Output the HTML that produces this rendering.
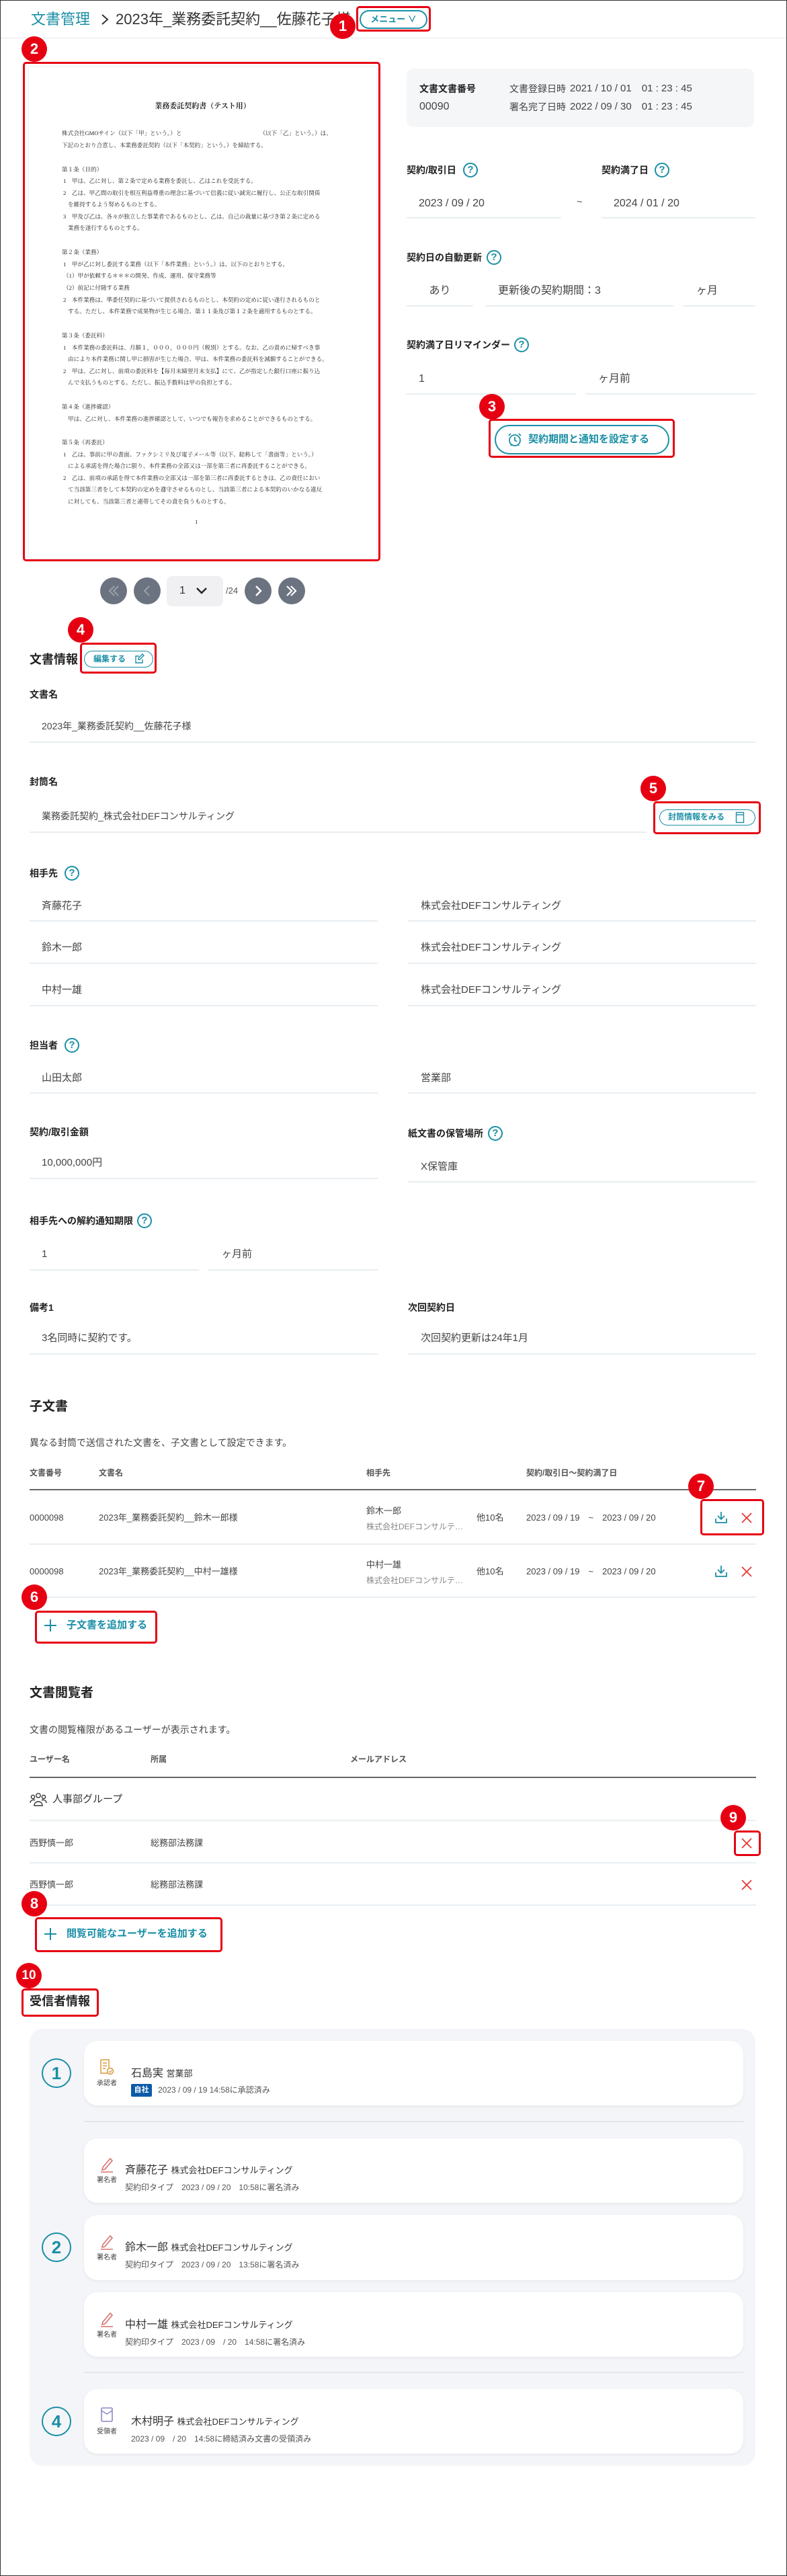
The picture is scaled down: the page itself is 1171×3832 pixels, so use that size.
<!DOCTYPE html>
<html><head><meta charset="utf-8">
<style>
*{margin:0;padding:0;box-sizing:border-box}
body{width:1171px;height:3832px;position:relative;background:#fff;font-family:"Liberation Sans","Noto Sans CJK JP",sans-serif;color:#333;overflow:hidden}
.a{position:absolute;white-space:nowrap}
.frame{position:absolute;left:0;top:0;width:1171px;height:3832px;border:1px solid #333;pointer-events:none;z-index:50}
.rb{position:absolute;border:3px solid #e60012;border-radius:5px;z-index:20}
.bd{position:absolute;width:38px;height:38px;border-radius:50%;background:#e60012;color:#fff;font-weight:bold;font-size:22px;line-height:38px;text-align:center;z-index:21}
.lb{font-size:14px;font-weight:bold;color:#222;line-height:20px}
.v{font-size:15px;color:#444;line-height:20px}
.ul{position:absolute;height:2px;background:#e8eef1}
.q{position:absolute;width:22px;height:22px;border:2px solid #1a8fa6;border-radius:50%;color:#1a8fa6;font-size:15px;line-height:18px;text-align:center;font-weight:bold}
.teal{color:#1a8fa6}
.ds{font-family:"Liberation Serif","Noto Serif CJK JP",serif;font-size:8.6px;color:#222;line-height:12px;position:absolute;white-space:nowrap}
.pg{position:absolute;width:40px;height:40px;border-radius:50%;background:#6c7380;top:859px}
.card{position:absolute;left:125px;width:981px;background:#fff;border-radius:20px;box-shadow:0 2px 4px rgba(0,0,0,.06)}
.num{position:absolute;left:62px;width:44px;height:44px;border:2px solid #1a8fa6;border-radius:50%;color:#1a8fa6;font-size:26px;line-height:40px;text-align:center;font-weight:bold}
.sm{font-size:10px;color:#444}
</style></head><body>
<div class="frame"></div>

<!-- header -->
<div class="a teal" style="left:46px;top:15px;font-size:22px;line-height:28px">文書管理</div>
<svg class="a" style="left:149px;top:20px" width="14" height="18"><path d="M3 2 L11 9 L3 16" fill="none" stroke="#333" stroke-width="2"/></svg>
<div class="a" style="left:172px;top:15px;font-size:22px;line-height:28px;color:#333">2023年_業務委託契約__佐藤花子様</div>
<div class="a" style="left:535px;top:15px;width:101px;height:28px;border:2px solid #1a8fa6;border-radius:14px;background:#fff;color:#1a8fa6;font-size:13px;font-weight:bold;line-height:24px;text-align:center;z-index:5">メニュー ∨</div>
<div class="a" style="left:0;top:56px;width:1171px;height:1px;background:#e5e7eb"></div>
<div class="rb" style="left:530px;top:9px;width:111px;height:38px"></div>
<div class="bd" style="left:491px;top:20px">1</div>

<!-- document page -->
<div class="a" style="left:43px;top:100px;width:517px;height:730px;background:#fff;box-shadow:0 0 4px rgba(0,0,0,.12)"></div>
<div class="ds" style="left:0;width:603px;text-align:center;top:152px;font-size:11px;font-weight:bold">業務委託契約書（テスト用）</div>
<div class="ds" style="left:92px;top:192px">株式会社GMOサイン（以下「甲」という。）と　　　　　　　　　　　　　　（以下「乙」という。）は、</div>
<div class="ds" style="left:92px;top:210px">下記のとおり合意し、本業務委託契約（以下「本契約」という。）を締結する。</div>
<div class="ds" style="left:92px;top:246px">第１条（目的）</div>
<div class="ds" style="left:94px;top:263px">1　甲は、乙に対し、第２条で定める業務を委託し、乙はこれを受託する。</div>
<div class="ds" style="left:94px;top:281px">2　乙は、甲乙間の取引を相互利益尊重の理念に基づいて信義に従い誠実に履行し、公正な取引関係</div>
<div class="ds" style="left:101px;top:298px">を維持するよう努めるものとする。</div>
<div class="ds" style="left:94px;top:316px">3　甲及び乙は、各々が独立した事業者であるものとし、乙は、自己の裁量に基づき第２条に定める</div>
<div class="ds" style="left:101px;top:333px">業務を遂行するものとする。</div>
<div class="ds" style="left:92px;top:369px">第２条（業務）</div>
<div class="ds" style="left:94px;top:387px">1　甲が乙に対し委託する業務（以下「本件業務」という。）は、以下のとおりとする。</div>
<div class="ds" style="left:94px;top:404px">（1）甲が依頼する＊＊＊の開発、作成、運用、保守業務等</div>
<div class="ds" style="left:94px;top:422px">（2）前記に付随する業務</div>
<div class="ds" style="left:94px;top:440px">2　本件業務は、準委任契約に基づいて提供されるものとし、本契約の定めに従い遂行されるものと</div>
<div class="ds" style="left:101px;top:457px">する。ただし、本件業務で成果物が生じる場合、第１１条及び第１２条を適用するものとする。</div>
<div class="ds" style="left:92px;top:493px">第３条（委託料）</div>
<div class="ds" style="left:94px;top:511px">1　本件業務の委託料は、月額１，０００，０００円（税別）とする。なお、乙の責めに帰すべき事</div>
<div class="ds" style="left:101px;top:528px">由により本件業務に関し甲に損害が生じた場合、甲は、本件業務の委託料を減額することができる。</div>
<div class="ds" style="left:94px;top:546px">2　甲は、乙に対し、前項の委託料を【毎月末締翌月末支払】にて、乙が指定した銀行口座に振り込</div>
<div class="ds" style="left:101px;top:563px">んで支払うものとする。ただし、振込手数料は甲の負担とする。</div>
<div class="ds" style="left:92px;top:599px">第４条（進捗確認）</div>
<div class="ds" style="left:101px;top:617px">甲は、乙に対し、本件業務の進捗確認として、いつでも報告を求めることができるものとする。</div>
<div class="ds" style="left:92px;top:652px">第５条（再委託）</div>
<div class="ds" style="left:94px;top:670px">1　乙は、事前に甲の書面、ファクシミリ及び電子メール等（以下、総称して「書面等」という。）</div>
<div class="ds" style="left:101px;top:687px">による承諾を得た場合に限り、本件業務の全部又は一部を第三者に再委託することができる。</div>
<div class="ds" style="left:94px;top:705px">2　乙は、前項の承諾を得て本件業務の全部又は一部を第三者に再委託するときは、乙の責任におい</div>
<div class="ds" style="left:101px;top:722px">て当該第三者をして本契約の定めを遵守させるものとし、当該第三者による本契約のいかなる違反</div>
<div class="ds" style="left:101px;top:740px">に対しても、当該第三者と連帯してその責を負うものとする。</div>
<div class="ds" style="left:290px;top:770px">1</div>
<div class="rb" style="left:34px;top:92px;width:532px;height:743px"></div>
<div class="bd" style="left:32px;top:54px">2</div>

<!-- pagination -->
<div class="pg" style="left:149px"><svg width="40" height="40"><path d="M21 13 L14 20 L21 27 M27 13 L20 20 L27 27" fill="none" stroke="#9aa0aa" stroke-width="2"/></svg></div>
<div class="pg" style="left:199px"><svg width="40" height="40"><path d="M23 13 L16 20 L23 27" fill="none" stroke="#9aa0aa" stroke-width="2"/></svg></div>
<div class="a" style="left:248px;top:857px;width:84px;height:45px;background:#f0f0f3;border-radius:8px"></div>
<div class="a" style="left:267px;top:868px;font-size:16px;line-height:22px;color:#333">1</div>
<svg class="a" style="left:290px;top:871px" width="20" height="16"><path d="M3 4 L10 11 L17 4" fill="none" stroke="#222" stroke-width="2.4"/></svg>
<div class="a" style="left:336px;top:869px;font-size:13px;line-height:20px;color:#555">/24</div>
<div class="pg" style="left:364px"><svg width="40" height="40"><path d="M17 13 L24 20 L17 27" fill="none" stroke="#fff" stroke-width="2.4"/></svg></div>
<div class="pg" style="left:414px"><svg width="40" height="40"><path d="M13 13 L20 20 L13 27 M19 13 L26 20 L19 27" fill="none" stroke="#fff" stroke-width="2.2"/></svg></div>

<!-- right info -->
<div class="a" style="left:605px;top:102px;width:517px;height:87px;background:#f5f6f8;border-radius:10px"></div>
<div class="a lb" style="left:624px;top:122px;font-size:14px">文書文書番号</div>
<div class="a v" style="left:624px;top:149px;font-size:16px">00090</div>
<div class="a" style="left:758px;top:122px;font-size:14px;line-height:20px;color:#444">文書登録日時</div>
<div class="a" style="left:848px;top:122px;font-size:15px;line-height:20px;color:#444">2021 / 10 / 01　01 : 23 : 45</div>
<div class="a" style="left:758px;top:149px;font-size:14px;line-height:20px;color:#444">署名完了日時</div>
<div class="a" style="left:848px;top:149px;font-size:15px;line-height:20px;color:#444">2022 / 09 / 30　01 : 23 : 45</div>

<div class="a lb" style="left:605px;top:243px">契約/取引日</div><div class="q" style="left:689px;top:242px">?</div>
<div class="a lb" style="left:895px;top:243px">契約満了日</div><div class="q" style="left:974px;top:242px">?</div>
<div class="a v" style="left:623px;top:293px;font-size:16px">2023 / 09 / 20</div>
<div class="ul" style="left:605px;top:323px;width:230px"></div>
<div class="a" style="left:858px;top:292px;font-size:15px;color:#555">~</div>
<div class="a v" style="left:913px;top:293px;font-size:16px">2024 / 01 / 20</div>
<div class="ul" style="left:895px;top:323px;width:229px"></div>

<div class="a lb" style="left:605px;top:373px">契約日の自動更新</div><div class="q" style="left:724px;top:372px">?</div>
<div class="a v" style="left:605px;width:99px;text-align:center;top:423px;font-size:16px">あり</div>
<div class="a v" style="left:741px;top:423px;font-size:16px">更新後の契約期間：3</div>
<div class="a v" style="left:1036px;top:423px;font-size:16px">ヶ月</div>
<div class="ul" style="left:605px;top:454px;width:99px"></div>
<div class="ul" style="left:723px;top:454px;width:279px"></div>
<div class="ul" style="left:1017px;top:454px;width:107px"></div>

<div class="a lb" style="left:605px;top:503px">契約満了日リマインダー</div><div class="q" style="left:765px;top:502px">?</div>
<div class="a v" style="left:623px;top:554px;font-size:16px">1</div>
<div class="a v" style="left:890px;top:554px;font-size:16px">ヶ月前</div>
<div class="ul" style="left:605px;top:585px;width:252px"></div>
<div class="ul" style="left:871px;top:585px;width:253px"></div>

<div class="a" style="left:736px;top:632px;width:260px;height:44px;border:2px solid #1a8fa6;border-radius:22px;color:#1a8fa6;font-size:15px;font-weight:bold;line-height:40px;padding-left:48px">契約期間と通知を設定する</div>
<svg class="a" style="left:754px;top:642px" width="24" height="24"><circle cx="12" cy="13" r="8" fill="none" stroke="#1a8fa6" stroke-width="1.8"/><path d="M12 8 V13 L15 15 M3 6 L6 3 M21 6 L18 3 M6 21 L7 19 M18 21 L17 19" fill="none" stroke="#1a8fa6" stroke-width="1.8"/></svg>
<div class="rb" style="left:727px;top:623px;width:277px;height:58px"></div>
<div class="bd" style="left:713px;top:586px">3</div>

<!-- 文書情報 -->
<div class="a" style="left:44px;top:968px;font-size:18px;font-weight:bold;line-height:26px;color:#222">文書情報</div>
<div class="a" style="left:125px;top:968px;width:103px;height:25px;border:1.5px solid #1a8fa6;border-radius:13px;color:#1a8fa6;font-size:12px;font-weight:bold;line-height:22px;padding-left:13px">編集する</div>
<svg class="a" style="left:200px;top:972px" width="16" height="16"><path d="M12 9 V14 H2 V4 H7 M8 9 L14 3 L12 1 L6 7 L6 9 Z" fill="none" stroke="#1a8fa6" stroke-width="1.4"/></svg>
<div class="rb" style="left:119px;top:956px;width:114px;height:46px"></div>
<div class="bd" style="left:101px;top:918px">4</div>

<div class="a lb" style="left:44px;top:1023px">文書名</div>
<div class="a v" style="left:62px;top:1070px;font-size:14px">2023年_業務委託契約__佐藤花子様</div>
<div class="ul" style="left:44px;top:1103px;width:1081px"></div>

<div class="a lb" style="left:44px;top:1153px">封筒名</div>
<div class="a v" style="left:62px;top:1204px;font-size:14px">業務委託契約_株式会社DEFコンサルティング</div>
<div class="ul" style="left:44px;top:1237px;width:918px"></div>
<div class="a" style="left:981px;top:1204px;width:143px;height:24px;border:1.5px solid #1a8fa6;border-radius:12px;color:#1a8fa6;font-size:12px;font-weight:bold;line-height:21px;padding-left:12px">封筒情報をみる</div>
<svg class="a" style="left:1094px;top:1207px" width="14" height="18"><rect x="1.5" y="1.5" width="11" height="15" fill="none" stroke="#1a8fa6" stroke-width="1.4"/><path d="M1.5 5 H12.5" stroke="#1a8fa6" stroke-width="1.4"/></svg>
<div class="rb" style="left:972px;top:1192px;width:160px;height:49px"></div>
<div class="bd" style="left:953px;top:1154px">5</div>

<div class="a lb" style="left:44px;top:1289px">相手先</div><div class="q" style="left:96px;top:1288px">?</div>
<div class="a v" style="left:62px;top:1338px">斉藤花子</div><div class="a v" style="left:626px;top:1338px">株式会社DEFコンサルティング</div>
<div class="ul" style="left:44px;top:1369px;width:518px"></div><div class="ul" style="left:607px;top:1369px;width:518px"></div>
<div class="a v" style="left:62px;top:1400px">鈴木一郎</div><div class="a v" style="left:626px;top:1400px">株式会社DEFコンサルティング</div>
<div class="ul" style="left:44px;top:1432px;width:518px"></div><div class="ul" style="left:607px;top:1432px;width:518px"></div>
<div class="a v" style="left:62px;top:1463px">中村一雄</div><div class="a v" style="left:626px;top:1463px">株式会社DEFコンサルティング</div>
<div class="ul" style="left:44px;top:1495px;width:518px"></div><div class="ul" style="left:607px;top:1495px;width:518px"></div>

<div class="a lb" style="left:44px;top:1545px">担当者</div><div class="q" style="left:96px;top:1544px">?</div>
<div class="a v" style="left:62px;top:1594px">山田太郎</div><div class="a v" style="left:626px;top:1594px">営業部</div>
<div class="ul" style="left:44px;top:1625px;width:518px"></div><div class="ul" style="left:607px;top:1625px;width:518px"></div>

<div class="a lb" style="left:44px;top:1674px">契約/取引金額</div>
<div class="a lb" style="left:607px;top:1676px">紙文書の保管場所</div><div class="q" style="left:726px;top:1675px">?</div>
<div class="a v" style="left:62px;top:1720px">10,000,000円</div><div class="a v" style="left:626px;top:1726px">X保管庫</div>
<div class="ul" style="left:44px;top:1752px;width:518px"></div><div class="ul" style="left:607px;top:1757px;width:518px"></div>

<div class="a lb" style="left:44px;top:1806px">相手先への解約通知期限</div><div class="q" style="left:204px;top:1805px">?</div>
<div class="a v" style="left:62px;top:1856px">1</div><div class="a v" style="left:330px;top:1856px">ヶ月前</div>
<div class="ul" style="left:44px;top:1888px;width:252px"></div><div class="ul" style="left:310px;top:1888px;width:252px"></div>

<div class="a lb" style="left:44px;top:1935px">備考1</div><div class="a lb" style="left:607px;top:1935px">次回契約日</div>
<div class="a v" style="left:62px;top:1981px">3名同時に契約です。</div><div class="a v" style="left:626px;top:1981px">次回契約更新は24年1月</div>
<div class="ul" style="left:44px;top:2013px;width:518px"></div><div class="ul" style="left:607px;top:2013px;width:518px"></div>

<!-- 子文書 -->
<div class="a" style="left:44px;top:2080px;font-size:19px;font-weight:bold;line-height:26px;color:#222">子文書</div>
<div class="a" style="left:44px;top:2136px;font-size:14px;line-height:20px;color:#444">異なる封筒で送信された文書を、子文書として設定できます。</div>
<div class="a" style="left:44px;top:2182px;font-size:12px;font-weight:bold;color:#555;line-height:18px">文書番号</div>
<div class="a" style="left:147px;top:2182px;font-size:12px;font-weight:bold;color:#555;line-height:18px">文書名</div>
<div class="a" style="left:545px;top:2182px;font-size:12px;font-weight:bold;color:#555;line-height:18px">相手先</div>
<div class="a" style="left:783px;top:2182px;font-size:12px;font-weight:bold;color:#555;line-height:18px">契約/取引日〜契約満了日</div>
<div class="a" style="left:44px;top:2215px;width:1081px;height:2px;background:#666"></div>

<div class="a" style="left:44px;top:2249px;font-size:13px;line-height:18px;color:#444">0000098</div>
<div class="a" style="left:147px;top:2249px;font-size:13px;line-height:18px;color:#444">2023年_業務委託契約__鈴木一郎様</div>
<div class="a" style="left:545px;top:2239px;font-size:13px;line-height:18px;color:#444">鈴木一郎</div>
<div class="a" style="left:545px;top:2263px;font-size:12px;line-height:16px;color:#888">株式会社DEFコンサルテ…</div>
<div class="a" style="left:709px;top:2249px;font-size:13px;line-height:18px;color:#444">他10名</div>
<div class="a" style="left:783px;top:2249px;font-size:13px;line-height:18px;color:#444">2023 / 09 / 19　~　2023 / 09 / 20</div>
<svg class="a" style="left:1063px;top:2247px" width="20" height="20"><path d="M10 2 V13 M5 8 L10 13 L15 8 M2 12 V18 H18 V12" fill="none" stroke="#1a8fa6" stroke-width="1.8"/></svg>
<svg class="a" style="left:1102px;top:2249px" width="18" height="18"><path d="M2 2 L16 16 M16 2 L2 16" stroke="#e53935" stroke-width="1.8"/></svg>
<div class="ul" style="left:44px;top:2296px;width:1081px"></div>

<div class="a" style="left:44px;top:2329px;font-size:13px;line-height:18px;color:#444">0000098</div>
<div class="a" style="left:147px;top:2329px;font-size:13px;line-height:18px;color:#444">2023年_業務委託契約__中村一雄様</div>
<div class="a" style="left:545px;top:2319px;font-size:13px;line-height:18px;color:#444">中村一雄</div>
<div class="a" style="left:545px;top:2343px;font-size:12px;line-height:16px;color:#888">株式会社DEFコンサルテ…</div>
<div class="a" style="left:709px;top:2329px;font-size:13px;line-height:18px;color:#444">他10名</div>
<div class="a" style="left:783px;top:2329px;font-size:13px;line-height:18px;color:#444">2023 / 09 / 19　~　2023 / 09 / 20</div>
<svg class="a" style="left:1063px;top:2327px" width="20" height="20"><path d="M10 2 V13 M5 8 L10 13 L15 8 M2 12 V18 H18 V12" fill="none" stroke="#1a8fa6" stroke-width="1.8"/></svg>
<svg class="a" style="left:1102px;top:2329px" width="18" height="18"><path d="M2 2 L16 16 M16 2 L2 16" stroke="#e53935" stroke-width="1.8"/></svg>
<div class="ul" style="left:44px;top:2375px;width:1081px"></div>
<div class="rb" style="left:1042px;top:2230px;width:95px;height:54px"></div>
<div class="bd" style="left:1024px;top:2192px">7</div>

<svg class="a" style="left:65px;top:2408px" width="20" height="20"><path d="M10 1 V19 M1 10 H19" stroke="#1a8fa6" stroke-width="2"/></svg>
<div class="a teal" style="left:99px;top:2407px;font-size:15px;font-weight:bold;line-height:22px">子文書を追加する</div>
<div class="rb" style="left:52px;top:2396px;width:182px;height:49px"></div>
<div class="bd" style="left:32px;top:2357px">6</div>

<!-- 文書閲覧者 -->
<div class="a" style="left:44px;top:2506px;font-size:19px;font-weight:bold;line-height:26px;color:#222">文書閲覧者</div>
<div class="a" style="left:44px;top:2563px;font-size:14px;line-height:20px;color:#444">文書の閲覧権限があるユーザーが表示されます。</div>
<div class="a" style="left:44px;top:2608px;font-size:12px;font-weight:bold;color:#555;line-height:18px">ユーザー名</div>
<div class="a" style="left:224px;top:2608px;font-size:12px;font-weight:bold;color:#555;line-height:18px">所属</div>
<div class="a" style="left:521px;top:2608px;font-size:12px;font-weight:bold;color:#555;line-height:18px">メールアドレス</div>
<div class="a" style="left:44px;top:2643px;width:1081px;height:2px;background:#666"></div>
<svg class="a" style="left:44px;top:2666px" width="26" height="22"><circle cx="13" cy="5" r="3.2" fill="none" stroke="#333" stroke-width="1.4"/><circle cx="5" cy="7" r="2.6" fill="none" stroke="#333" stroke-width="1.4"/><circle cx="21" cy="7" r="2.6" fill="none" stroke="#333" stroke-width="1.4"/><path d="M7 20 C7 12 19 12 19 20 Z M1 16 C1 11 7 11 8 12 M25 16 C25 11 19 11 18 12" fill="none" stroke="#333" stroke-width="1.4"/></svg>
<div class="a" style="left:78px;top:2667px;font-size:15px;line-height:20px;color:#333">人事部グループ</div>
<div class="ul" style="left:44px;top:2707px;width:1081px"></div>
<div class="a" style="left:44px;top:2733px;font-size:13px;line-height:18px;color:#444">西野慎一郎</div>
<div class="a" style="left:224px;top:2733px;font-size:13px;line-height:18px;color:#444">総務部法務課</div>
<svg class="a" style="left:1102px;top:2733px" width="18" height="18"><path d="M2 2 L16 16 M16 2 L2 16" stroke="#e53935" stroke-width="1.8"/></svg>
<div class="ul" style="left:44px;top:2770px;width:1081px"></div>
<div class="a" style="left:44px;top:2795px;font-size:13px;line-height:18px;color:#444">西野慎一郎</div>
<div class="a" style="left:224px;top:2795px;font-size:13px;line-height:18px;color:#444">総務部法務課</div>
<svg class="a" style="left:1102px;top:2795px" width="18" height="18"><path d="M2 2 L16 16 M16 2 L2 16" stroke="#e53935" stroke-width="1.8"/></svg>
<div class="ul" style="left:44px;top:2833px;width:1081px"></div>
<div class="rb" style="left:1092px;top:2723px;width:40px;height:38px"></div>
<div class="bd" style="left:1072px;top:2685px">9</div>

<svg class="a" style="left:65px;top:2867px" width="20" height="20"><path d="M10 1 V19 M1 10 H19" stroke="#1a8fa6" stroke-width="2"/></svg>
<div class="a teal" style="left:99px;top:2866px;font-size:15px;font-weight:bold;line-height:22px">閲覧可能なユーザーを追加する</div>
<div class="rb" style="left:52px;top:2852px;width:279px;height:52px"></div>
<div class="bd" style="left:32px;top:2813px">8</div>

<!-- 受信者情報 -->
<div class="a" style="left:44px;top:2964px;font-size:18px;font-weight:bold;line-height:26px;color:#222">受信者情報</div>
<div class="rb" style="left:32px;top:2958px;width:115px;height:42px"></div>
<div class="bd" style="left:24px;top:2920px;font-size:19px">10</div>

<div class="a" style="left:44px;top:3018px;width:1080px;height:650px;background:#f4f5f8;border-radius:20px"></div>

<div class="num" style="top:3062px">1</div>
<div class="card" style="top:3036px;height:96px"></div>
<svg class="a" style="left:148px;top:3062px" width="22" height="26"><path d="M2 2 H14 V14 M2 2 V22 H12 M5 7 H11 M5 11 H11 M5 15 H9" fill="none" stroke="#d99a3f" stroke-width="1.5"/><circle cx="16" cy="19" r="4.5" fill="none" stroke="#d99a3f" stroke-width="1.5"/><path d="M14 19 L16 21 L18.5 17.5" fill="none" stroke="#d99a3f" stroke-width="1.3"/></svg>
<div class="a sm" style="left:140px;top:3093px;width:38px;text-align:center;line-height:14px">承認者</div>
<div class="a" style="left:195px;top:3074px;font-size:16px;line-height:22px;color:#333">石島実 <span style="font-size:13px">営業部</span></div>
<div class="a" style="left:195px;top:3100px;width:31px;height:19px;background:#0b5aa8;color:#fff;font-size:11px;font-weight:bold;line-height:19px;text-align:center;border-radius:2px">自社</div>
<div class="a" style="left:235px;top:3100px;font-size:12px;line-height:19px;color:#555">2023 / 09 / 19 14:58に承認済み</div>

<div class="a" style="left:125px;top:3155px;width:981px;height:2px;background:#e4e6ea"></div>

<div class="num" style="top:3321px">2</div>
<div class="card" style="top:3181px;height:96px"></div>
<div class="card" style="top:3295px;height:97px"></div>
<div class="card" style="top:3410px;height:96px"></div>

<svg class="a" style="left:148px;top:3208px" width="22" height="24"><path d="M5 16 L16 3 L19 6 L8 19 L4 20 Z M2 23 H20" fill="none" stroke="#d9716f" stroke-width="1.6"/></svg>
<div class="a sm" style="left:140px;top:3237px;width:38px;text-align:center;line-height:14px">署名者</div>
<div class="a" style="left:186px;top:3218px;font-size:16px;line-height:22px;color:#333">斉藤花子 <span style="font-size:13px">株式会社DEFコンサルティング</span></div>
<div class="a" style="left:186px;top:3245px;font-size:12px;line-height:18px;color:#555">契約印タイプ　2023 / 09 / 20　10:58に署名済み</div>

<svg class="a" style="left:148px;top:3323px" width="22" height="24"><path d="M5 16 L16 3 L19 6 L8 19 L4 20 Z M2 23 H20" fill="none" stroke="#d9716f" stroke-width="1.6"/></svg>
<div class="a sm" style="left:140px;top:3352px;width:38px;text-align:center;line-height:14px">署名者</div>
<div class="a" style="left:186px;top:3333px;font-size:16px;line-height:22px;color:#333">鈴木一郎 <span style="font-size:13px">株式会社DEFコンサルティング</span></div>
<div class="a" style="left:186px;top:3360px;font-size:12px;line-height:18px;color:#555">契約印タイプ　2023 / 09 / 20　13:58に署名済み</div>

<svg class="a" style="left:148px;top:3438px" width="22" height="24"><path d="M5 16 L16 3 L19 6 L8 19 L4 20 Z M2 23 H20" fill="none" stroke="#d9716f" stroke-width="1.6"/></svg>
<div class="a sm" style="left:140px;top:3467px;width:38px;text-align:center;line-height:14px">署名者</div>
<div class="a" style="left:186px;top:3448px;font-size:16px;line-height:22px;color:#333">中村一雄 <span style="font-size:13px">株式会社DEFコンサルティング</span></div>
<div class="a" style="left:186px;top:3475px;font-size:12px;line-height:18px;color:#555">契約印タイプ　2023 / 09　/ 20　14:58に署名済み</div>

<div class="a" style="left:125px;top:3528px;width:981px;height:2px;background:#e4e6ea"></div>

<div class="num" style="top:3580px">4</div>
<div class="card" style="top:3554px;height:96px"></div>
<svg class="a" style="left:149px;top:3580px" width="20" height="24"><rect x="2" y="2" width="16" height="20" rx="1.5" fill="none" stroke="#8a86c4" stroke-width="1.6"/><path d="M2 6 L10 11 L18 6" fill="none" stroke="#8a86c4" stroke-width="1.4"/></svg>
<div class="a sm" style="left:140px;top:3611px;width:38px;text-align:center;line-height:14px">受領者</div>
<div class="a" style="left:195px;top:3592px;font-size:16px;line-height:22px;color:#333">木村明子 <span style="font-size:13px">株式会社DEFコンサルティング</span></div>
<div class="a" style="left:195px;top:3619px;font-size:12px;line-height:18px;color:#555">2023 / 09　/ 20　14:58に締結済み文書の受領済み</div>

</body></html>
